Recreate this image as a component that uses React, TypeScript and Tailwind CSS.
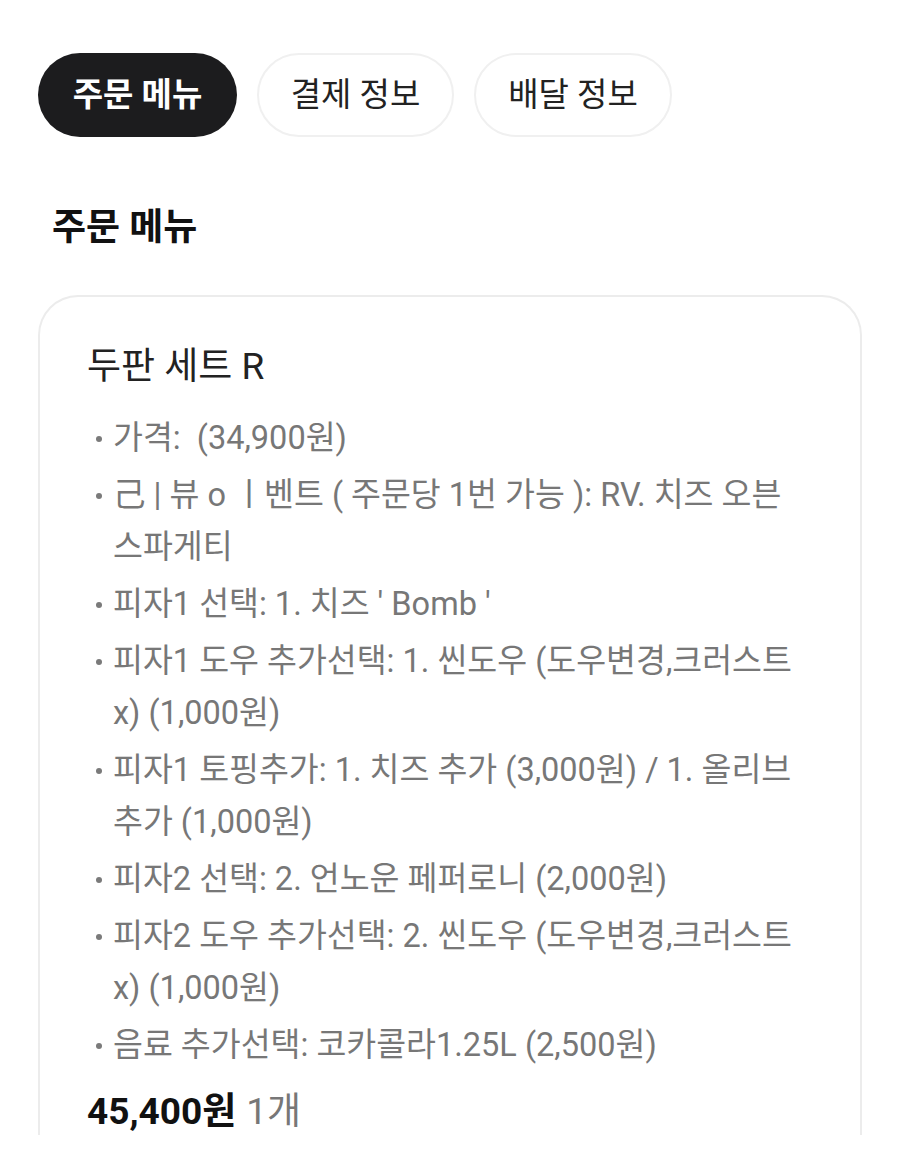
import React from "react";

const items: string[] = [
  "가격:  (34,900원)",
  "己 | 뷰 o ㅣ벤트 ( 주문당 1번 가능 ): RV. 치즈 오븐 스파게티",
  "피자1 선택: 1. 치즈 ' Bomb '",
  "피자1 도우 추가선택: 1. 씬도우 (도우변경,크러스트 x) (1,000원)",
  "피자1 토핑추가: 1. 치즈 추가 (3,000원) / 1. 올리브 추가 (1,000원)",
  "피자2 선택: 2. 언노운 페퍼로니 (2,000원)",
  "피자2 도우 추가선택: 2. 씬도우 (도우변경,크러스트 x) (1,000원)",
  "음료 추가선택: 코카콜라1.25L (2,500원)",
];

const font = { fontFamily: "Roboto, 'Noto Sans CJK KR', sans-serif" };

export default function App() {
  return (
    <div className="h-[1151px] overflow-hidden bg-white" style={font}>
      <div className="flex gap-[20px] pl-[38px] pt-[53px]">
        <button className="h-[84px] w-[199px] rounded-full bg-[#1c1c1e] text-[33px] font-bold text-white">
          주문 메뉴
        </button>
        <button className="h-[84px] w-[197px] rounded-full border-2 border-[#f0f0f0] bg-white text-[33px] text-[#222]">
          결제 정보
        </button>
        <button className="h-[84px] w-[198px] rounded-full border-2 border-[#f0f0f0] bg-white text-[33px] text-[#222]">
          배달 정보
        </button>
      </div>
      <h2 className="pl-[52px] pt-[67px] text-[37px] font-bold leading-[48px] text-[#111]">
        주문 메뉴
      </h2>
      <div className="mx-[38px] mt-[43px] h-[840px] overflow-hidden rounded-t-[40px] border-2 border-b-0 border-[#ececec] px-[47px] pt-[46px]">
        <div className="text-[37px] leading-[48px] text-[#222]">두판 세트 R</div>
        <ul className="mt-[21px] flex flex-col gap-[5px]">
          {items.map((t, i) => (
            <li key={i} className="relative break-keep whitespace-pre-wrap pl-[26px] text-[32.5px] leading-[52px] text-[#777]">
              <span className="absolute left-[9px] top-[24px] h-[6px] w-[6px] rounded-full bg-[#7a7a7a]" />
              {t}
            </li>
          ))}
        </ul>
        <div className="mt-[17px] leading-[48px]">
          <span className="text-[37px] font-bold text-[#111]">45,400원</span>
          <span className="ml-[10px] text-[37px] text-[#777]">1개</span>
        </div>
      </div>
    </div>
  );
}
